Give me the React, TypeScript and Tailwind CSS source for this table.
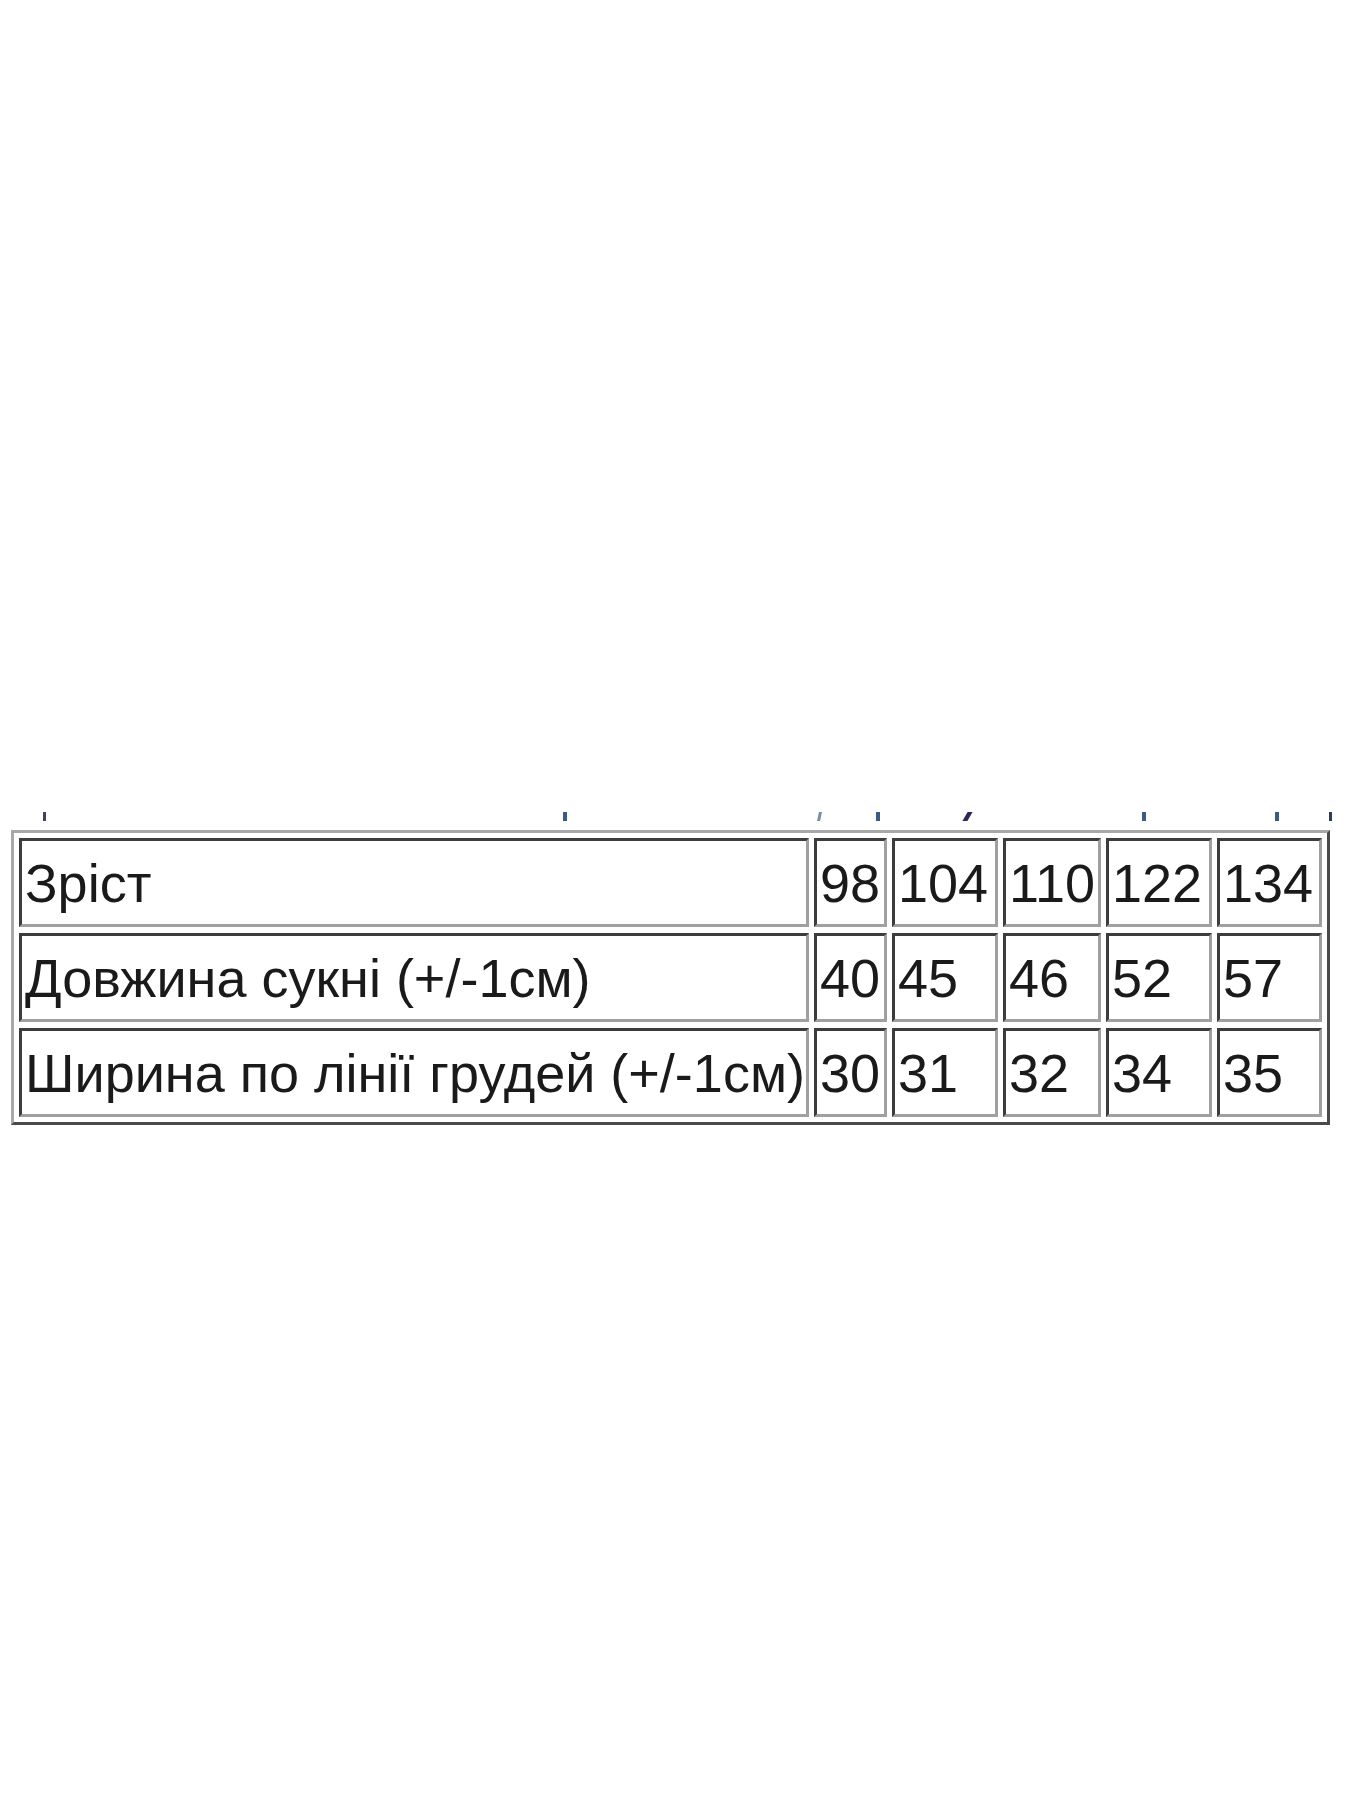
import React from "react";

const rows: string[][] = [
  ["Зріст", "98", "104", "110", "122", "134"],
  ["Довжина сукні (+/-1см)", "40", "45", "46", "52", "57"],
  ["Ширина по лінії грудей (+/-1см)", "30", "31", "32", "34", "35"],
];

const ticks: { ml: string; w: string; cls: string }[] = [
  { ml: "ml-[43px]", w: "w-[3px]", cls: "bg-[#4a3a6a]" },
  { ml: "ml-[517px]", w: "w-[4px]", cls: "bg-[#3a5a8a]" },
  { ml: "ml-[251px]", w: "w-[3px]", cls: "bg-[#7a8aaa] -skew-x-12" },
  { ml: "ml-[55px]", w: "w-[4px]", cls: "bg-[#3a5a8a]" },
  { ml: "ml-[85px]", w: "w-[5px]", cls: "bg-[#2a2a5a] -skew-x-[30deg]" },
  { ml: "ml-[172px]", w: "w-[4px]", cls: "bg-[#3a5a8a]" },
  { ml: "ml-[129px]", w: "w-[4px]", cls: "bg-[#3a5a8a]" },
  { ml: "ml-[50px]", w: "w-[3px]", cls: "bg-[#2a3a6a]" },
];

export default function App() {
  return (
    <div className="min-h-[1800px] w-[1350px] bg-white pt-[812px] font-['Liberation_Sans',Arial,sans-serif] text-[#1a1a1a]">
      <div className="flex h-[11px] items-start">
        {ticks.map((t, i) => (
          <span key={i} className={`${t.ml} ${t.w} h-[9px] ${t.cls}`} />
        ))}
      </div>
      <div className="ml-[11px] mt-[7px] inline-block border-[3px] border-t-[#a8a8a8] border-l-[#a8a8a8] border-b-[#4a4a4a] border-r-[#4a4a4a] p-[5px]">
        <div className="grid grid-cols-[790px_73px_106px_98px_106px_105px] gap-x-[5px] gap-y-[6px]">
          {rows.map((r, ri) =>
            r.map((c, ci) => (
              <div
                key={`${ri}-${ci}`}
                className="flex h-[89px] items-center whitespace-nowrap border-[3px] border-t-[#3c3c3c] border-l-[#3c3c3c] border-b-[#a0a0a0] border-r-[#a0a0a0] pl-[3px] text-[54px] leading-none"
              >
                {c}
              </div>
            ))
          )}
        </div>
      </div>
    </div>
  );
}
